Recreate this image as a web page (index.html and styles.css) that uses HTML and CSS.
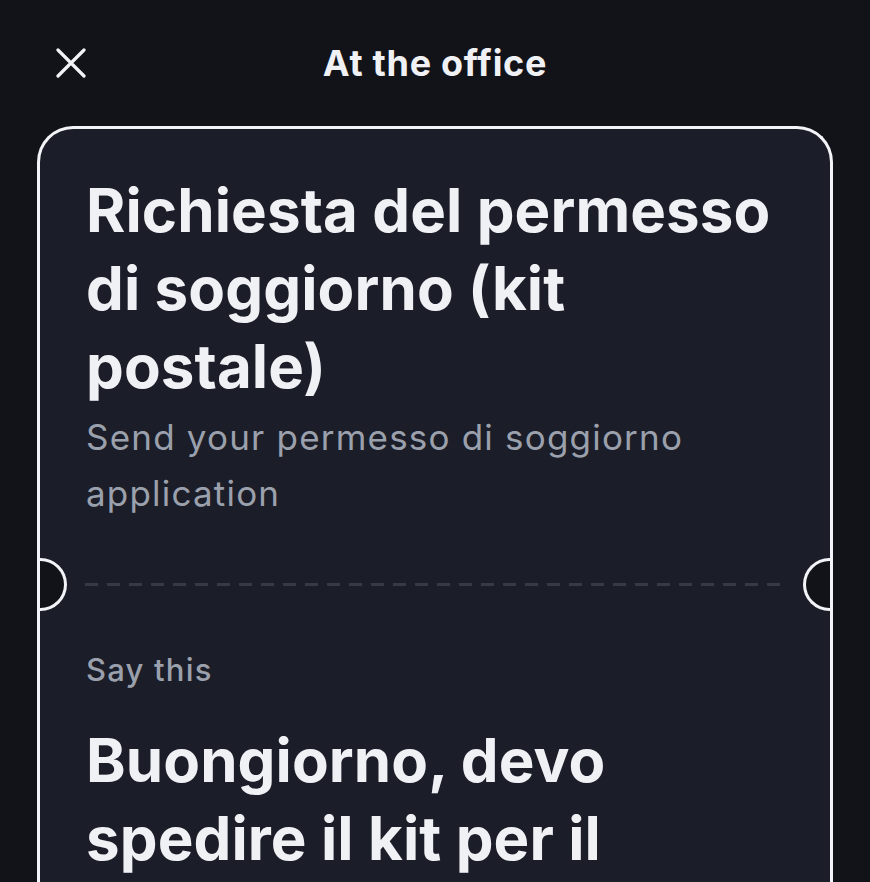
FILE: index.html
```html
<!DOCTYPE html>
<html lang="en">
<head>
<meta charset="utf-8">
<title>At the office</title>
<link rel="stylesheet" href="styles.css">
</head>
<body>
<header class="topbar">
  <button class="close" aria-label="Close">
    <svg width="30" height="30" viewBox="0 0 30 30" fill="none" stroke="#f2f3f6" stroke-width="3.2" stroke-linecap="round">
      <path d="M2 2 L28 28 M28 2 L2 28"/>
    </svg>
  </button>
  <h1 class="topbar-title">At the office</h1>
  <span class="spacer"></span>
</header>
<main class="card">
  <section class="card-top">
    <h2 class="big">Richiesta del permesso di soggiorno (kit postale)</h2>
    <p class="sub">Send your permesso di soggiorno application</p>
  </section>
  <div class="divider">
    <span class="notch notch-left"></span>
    <span class="dashes"></span>
    <span class="notch notch-right"></span>
  </div>
  <section class="card-bottom">
    <p class="label">Say this</p>
    <p class="big">Buongiorno, devo spedire il kit per il permesso di soggiorno.</p>
  </section>
</main>
</body>
</html>
```

FILE: styles.css
```css
* { box-sizing: border-box; }
html, body {
  margin: 0;
  padding: 0;
  height: 100%;
  overflow: hidden;
}
body {
  background: #111318;
  color: #f0f1f5;
  font-family: "Inter", "Noto Sans", sans-serif;
}
.topbar {
  height: 126px;
  display: flex;
  align-items: center;
  justify-content: space-between;
  padding: 0 56px;
}
.close {
  width: 30px;
  height: 30px;
  padding: 0;
  border: 0;
  background: none;
  display: flex;
}
.spacer { width: 30px; }
.topbar-title {
  margin: 0;
  font-size: 36px;
  font-weight: 700;
  letter-spacing: 0.7px;
  color: #f0f1f5;
}
.card {
  margin: 0 37px;
  height: 1000px;
  background: #1b1e28;
  border: 3px solid #f3f4f7;
  border-bottom: 0;
  border-radius: 36px 36px 0 0;
}
.card-top {
  padding: 42px 46px 0 46px;
}
.big {
  margin: 0;
  font-size: 60px;
  line-height: 78px;
  font-weight: 700;
  letter-spacing: 0.1px;
  color: #f0f1f5;
}
.sub {
  margin: 4px 0 0;
  font-size: 35px;
  line-height: 56px;
  letter-spacing: 1.2px;
  color: #9ba0ad;
}
.divider {
  position: relative;
  margin-top: 61px;
  height: 4px;
  display: flex;
  align-items: center;
  padding: 0 42px 0 45px;
}
.dashes {
  flex: 1;
  height: 3px;
  background: repeating-linear-gradient(90deg, #363a45 0 13px, transparent 13px 22px);
}
.notch {
  position: absolute;
  top: 50%;
  width: 27px;
  height: 53px;
  margin-top: -26.5px;
  background: #111318;
  border: 3px solid #f3f4f7;
}
.notch-left {
  left: 0;
  border-left: 0;
  border-radius: 0 27px 27px 0;
}
.notch-right {
  right: 0;
  border-right: 0;
  border-radius: 27px 0 0 27px;
}
.card-bottom {
  padding: 64px 46px 0 46px;
}
.label {
  margin: 0 0 31px;
  font-size: 31px;
  line-height: 40px;
  font-weight: 500;
  letter-spacing: 1.2px;
  color: #9ba0ad;
}
```
